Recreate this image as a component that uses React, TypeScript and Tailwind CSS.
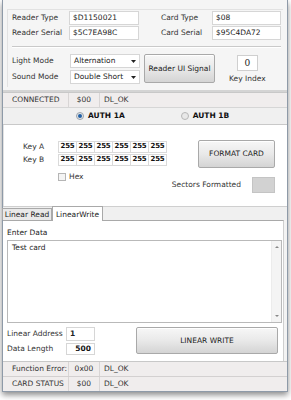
import React from "react";

const Input = ({ v, w, bold }: { v: string; w: string; bold?: boolean }) => (
  <div className={`${w} h-[14px] bg-white border border-[#d6d6d6] flex items-center px-[3px] text-[#222] ${bold ? "font-bold" : ""}`}>{v}</div>
);

const Select = ({ v }: { v: string }) => (
  <div className="w-[70px] h-[14px] bg-white border border-[#d6d6d6] flex items-center justify-between px-[3px] text-[#222]">
    <span>{v}</span>
    <svg width="5" height="3" viewBox="0 0 5 3"><path d="M0 0h5L2.5 3z" fill="#222" /></svg>
  </div>
);

const Btn = ({ t, cls }: { t: string; cls: string }) => (
  <div className={`${cls} rounded-[2px] border border-[#a9a9a9] bg-gradient-to-b from-[#f7f7f7] via-[#e9e9e9] to-[#d4d4d4] flex items-center justify-center text-[#222] shadow-[inset_0_1px_0_#fff]`}>{t}</div>
);

const StatusRow = ({ a, b, c, top }: { a: string; b: string; c: string; top?: boolean }) => (
  <div className={`h-[15px] flex items-center bg-[#f0eded] ${top ? "border-t border-[#c8c8c8]" : "border-t border-[#d3d0d0]"}`}>
    <div className="w-[66px] pl-[9px] h-full flex items-center border-r border-[#d8d5d5]">{a}</div>
    <div className="w-[31px] h-full flex items-center justify-center border-r border-[#d8d5d5]">{b}</div>
    <div className="pl-[4px]">{c}</div>
  </div>
);

const KeyRow = ({ label }: { label: string }) => (
  <div className="flex items-center h-[12px]">
    <div className="w-[54px] pl-[19px]">{label}</div>
    <div className="flex">
      {[0, 1, 2, 3, 4, 5].map((i) => (
        <div key={i} className="w-[19px] h-[12px] border border-[#dadada] -ml-px first:ml-0 flex items-center justify-center font-bold text-[7px] tracking-[-0.2px] text-[#111] bg-white">255</div>
      ))}
    </div>
  </div>
);

export default function App() {
  return (
    <div className="w-[291px] h-[400px] bg-white overflow-hidden text-[7.5px] leading-none text-[#333] font-['DejaVu_Sans',sans-serif]">
      <div className="ml-[2px] w-[286px] h-[392px] border-x border-b border-[#8e9aa8] bg-[#f3f3f3] flex flex-col shadow-[0_3px_6px_rgba(0,0,0,0.45)]">
        {/* Top panel */}
        <div className="h-[90px] px-[4px] pt-[9px] bg-[#f5f5f5]">
          <div className="border-l border-t border-[#e2e2e2] h-[78px] pt-[1px] pl-[4px]">
            <div className="flex items-center h-[14px]">
              <div className="w-[57px]">Reader Type</div>
              <Input v="$D1150021" w="w-[70px]" />
              <div className="w-[22px]" />
              <div className="w-[51px]">Card Type</div>
              <Input v="$08" w="w-[69px]" />
            </div>
            <div className="flex items-center h-[14px] mt-[1px]">
              <div className="w-[57px]">Reader Serial</div>
              <Input v="$5C7EA98C" w="w-[70px]" />
              <div className="w-[22px]" />
              <div className="w-[51px]">Card Serial</div>
              <Input v="$95C4DA72" w="w-[69px]" />
            </div>
            <div className="mt-[6px] mr-[2px] h-[2px] border-t border-[#c9c9c9] border-b border-b-white" />
            <div className="flex mt-[6px]">
              <div className="flex flex-col gap-[2px]">
                <div className="flex items-center h-[14px]">
                  <div className="w-[58px]">Light Mode</div>
                  <Select v="Alternation" />
                </div>
                <div className="flex items-center h-[14px]">
                  <div className="w-[58px]">Sound Mode</div>
                  <Select v="Double Short" />
                </div>
              </div>
              <Btn t="Reader UI Signal" cls="ml-[4px] w-[71px] h-[29px]" />
              <div className="ml-[14px] flex flex-col items-center">
                <div className="mt-[1px] w-[21px] h-[16px] bg-white border border-[#cfcfcf] flex items-center justify-center text-[9px] font-['DejaVu_Serif',serif] text-[#222]">0</div>
                <div className="mt-[4px]">Key Index</div>
              </div>
            </div>
          </div>
        </div>
        {/* status */}
        <div className="border-t-2 border-[#d4d4d4]">
          <StatusRow a="CONNECTED" b="$00" c="DL_OK" top />
        </div>
        {/* auth */}
        <div className="h-[18px] bg-[#f0f0f0] border-t border-[#d6d6d6] border-b border-b-[#c9c9c9] flex items-center font-bold text-[#111]">
          <div className="ml-[73px] flex items-center">
            <div className="w-[8px] h-[8px] rounded-full border border-[#9aa3ad] bg-[#e6e6e6] flex items-center justify-center">
              <div className="w-[4px] h-[4px] rounded-full bg-[#1f5fa6]" />
            </div>
            <span className="ml-[4px]">AUTH 1A</span>
          </div>
          <div className="ml-[56px] flex items-center">
            <div className="w-[8px] h-[8px] rounded-full border border-[#b7b7b7] bg-[#e8e8e8]" />
            <span className="ml-[4px]">AUTH 1B</span>
          </div>
        </div>
        {/* key panel */}
        <div className="h-[82px] bg-white flex border-l border-[#e2e2e2]">
          <div className="pt-[16px] flex flex-col gap-[1px]">
            <KeyRow label="Key A" />
            <KeyRow label="Key B" />
            <div className="flex items-center mt-[6px] ml-[54px]">
              <div className="w-[8px] h-[8px] border border-[#b5b5b5] bg-[#f4f4f4]" />
              <span className="ml-[3px]">Hex</span>
            </div>
          </div>
          <div className="ml-auto mr-[12px] flex flex-col items-end">
            <Btn t="FORMAT CARD" cls="mt-[15px] w-[77px] h-[28px]" />
            <div className="flex items-center mt-[9px] whitespace-nowrap">
              <span>Sectors Formatted</span>
              <div className="ml-[11px] w-[23px] h-[16px] bg-[#d2d2d2] border border-[#c4c4c4]" />
            </div>
          </div>
        </div>
        {/* tabs */}
        <div className="h-[14px] bg-[#f0f0f0] border-t border-[#cfcfcf] flex items-end relative">
          <div className="ml-[-1px] w-[50px] h-[12px] border border-[#a9a9a9] border-b-0 bg-[#e9e9e9] flex items-center justify-center text-[#222]">Linear Read</div>
          <div className="w-[51px] h-[15px] border border-[#a9a9a9] border-b-0 bg-white flex items-center justify-center text-[#222] relative z-10 -mb-px">LinearWrite</div>
        </div>
        {/* content */}
        <div className="h-[141px] bg-white border-t border-[#a9a9a9] border-r border-r-[#cfcfcf] mr-[3px] pl-[4px] pr-[1px]">
          <div className="mt-[8px] text-[#222]">Enter Data</div>
          <div className="mt-[3px] h-[83px] border border-[#b9b9b9] flex">
            <div className="flex-1 pl-[4px] pt-[3px] text-[#222]">Test card</div>
            <div className="w-[10px] border-l border-[#ececec] bg-[#f4f4f4] flex flex-col justify-between items-center py-[5px]">
              <svg width="4" height="2" viewBox="0 0 4 2"><path d="M0 2L2 0l2 2z" fill="#888" /></svg>
              <svg width="4" height="2" viewBox="0 0 4 2"><path d="M0 0h4L2 2z" fill="#888" /></svg>
            </div>
          </div>
          <div className="flex mt-[4px]">
            <div className="flex flex-col gap-[3px] pt-[1px]">
              <div className="flex items-center h-[12px]">
                <div className="w-[59px]">Linear Address</div>
                <Input v="1" w="w-[29px]" bold />
              </div>
              <div className="flex items-center h-[12px]">
                <div className="w-[59px]">Data Length</div>
                <div className="w-[29px] h-[12px] bg-white border border-[#d6d6d6] flex items-center justify-end pr-[3px] font-bold text-[#111]">500</div>
              </div>
            </div>
            <Btn t="LINEAR WRITE" cls="ml-[41px] w-[142px] h-[27px]" />
          </div>
        </div>
        {/* bottom status */}
        <StatusRow a="Function Error:" b="0x00" c="DL_OK" top />
        <StatusRow a="CARD STATUS" b="$00" c="DL_OK" />
      </div>
    </div>
  );
}
